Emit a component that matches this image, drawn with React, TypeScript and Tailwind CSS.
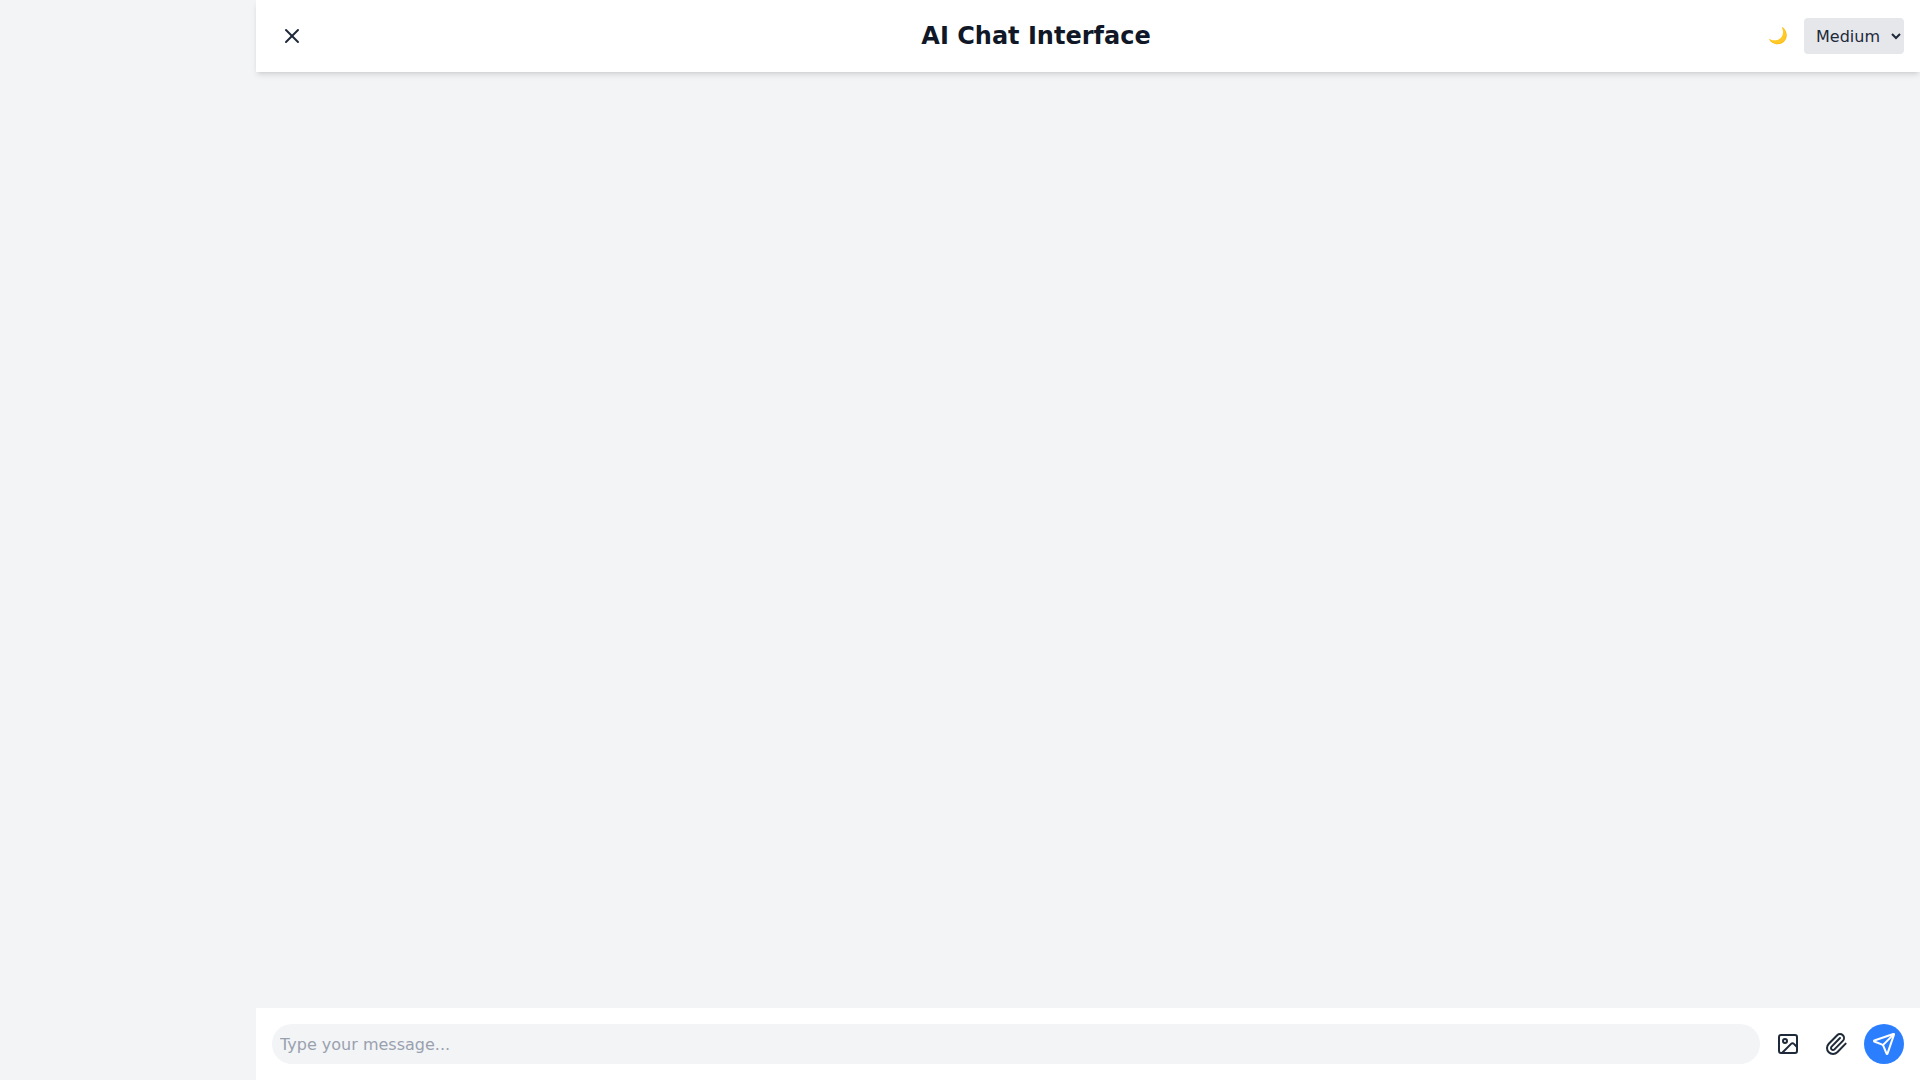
import React from 'react';
import { Image, Paperclip, Send, X } from 'lucide-react';

const App = () => {
  return (
    <div className="flex h-screen bg-gray-100 font-['DejaVu_Sans',sans-serif]">
      <div className="w-64 shrink-0" />
      <div className="flex flex-1 flex-col min-w-0">
        <header className="flex items-center justify-between bg-white p-4 shadow-md">
          <button className="p-2 text-gray-800">
            <X size={24} />
          </button>
          <h1 className="text-2xl font-bold text-gray-900">AI Chat Interface</h1>
          <div className="flex items-center gap-2">
            <button className="p-2 text-gray-800">🌙</button>
            <select className="h-9 rounded bg-gray-200 px-2 text-gray-800" defaultValue="medium">
              <option value="small">Small</option>
              <option value="medium">Medium</option>
              <option value="large">Large</option>
            </select>
          </div>
        </header>
        <main className="flex-1 overflow-y-auto" />
        <footer className="flex items-center gap-2 bg-white p-4">
          <input
            type="text"
            placeholder="Type your message..."
            className="h-10 flex-1 rounded-full bg-gray-100 px-2 text-gray-800 placeholder:text-gray-400 outline-none"
          />
          <button className="p-2 text-gray-800">
            <Image size={24} />
          </button>
          <button className="p-2 text-gray-800">
            <Paperclip size={24} />
          </button>
          <button className="rounded-full bg-blue-500 p-2 text-white">
            <Send size={24} />
          </button>
        </footer>
      </div>
    </div>
  );
};

export default App;
